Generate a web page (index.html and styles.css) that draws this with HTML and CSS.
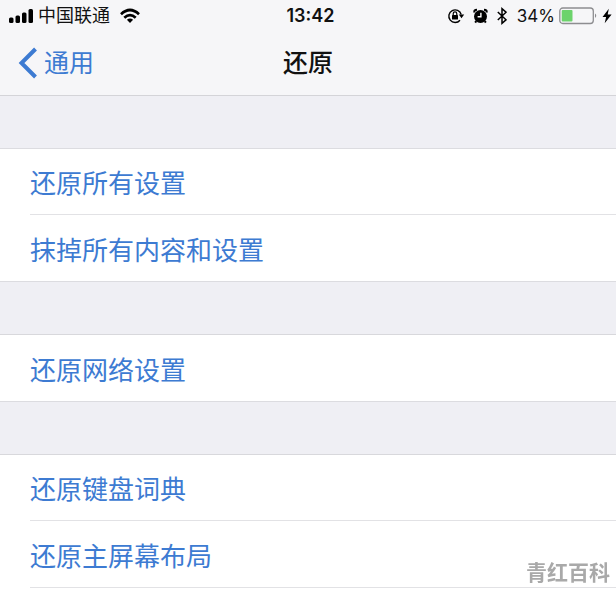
FILE: index.html
```html
<!DOCTYPE html>
<html lang="zh-CN">
<head>
<meta charset="utf-8">
<meta name="viewport" content="width=device-width, initial-scale=1">
<title>还原</title>
<link rel="stylesheet" href="styles.css">
</head>
<body>
<header class="top">
  <div class="status">
    <div class="status-left">
      <svg width="25" height="16" viewBox="0 0 25 16" aria-hidden="true">
        <rect x="0" y="9.500" width="4.500" height="5.500" rx="1.500"/>
        <rect x="6.500" y="7.500" width="4.500" height="7.500" rx="1.500"/>
        <rect x="13" y="4.500" width="4.500" height="10.500" rx="1.500"/>
        <rect x="19.500" y="1" width="4.500" height="14" rx="1.500"/>
      </svg>
      <span class="carrier">中国联通</span>
      <svg class="wifi" width="20" height="16" viewBox="0 0 20 16" aria-hidden="true">
        <g fill="none" stroke="#000" stroke-width="2.700">
          <path d="M1 6.200Q10-2.200 19 6.200"/>
          <path d="M4.300 9.800Q10 4.400 15.700 9.800"/>
        </g>
        <path d="M6.900 11.700Q10 9.100 13.100 11.700L10 15Z"/>
      </svg>
    </div>
    <time class="clock">13:42</time>
    <div class="status-right">
      <svg width="18" height="16" viewBox="0 0 18 16" aria-hidden="true">
        <path d="M13 12.200A6.300 6.300 0 1 1 14.200 6.500" fill="none" stroke="#000" stroke-width="1.400"/>
        <path d="M11.800 6.500h5.400l-2.700 3.800Z"/>
        <rect x="5" y="7" width="6" height="4.500" rx=".6"/>
        <path d="M6.200 7.300V5.700a1.800 1.800 0 0 1 3.600 0v1.600" fill="none" stroke="#000" stroke-width="1.200"/>
      </svg>
      <svg class="alarm" width="15" height="16" viewBox="0 0 15 16" aria-hidden="true">
        <circle cx="7.500" cy="8.500" r="6.500"/>
        <path d="M1.500 4.500Q.6 1.900 4 1.700M13.500 4.500Q14.400 1.900 11 1.700M3.200 13l-1 1.600M11.800 13l1 1.600" fill="none" stroke="#000" stroke-width="2"/>
        <path d="M7.900 4.800v4H4.600" fill="none" stroke="#fff" stroke-width="1.400"/>
      </svg>
      <svg class="bluetooth" width="10" height="18" viewBox="0 0 10 18" aria-hidden="true">
        <path d="M.8 5L9 12.800L5 16.300V1.700L9 5.200L.8 13" fill="none" stroke="#000" stroke-width="1.500"/>
      </svg>
      <span class="percent">34%</span>
      <svg class="battery" width="39" height="18" viewBox="0 0 39 18" aria-hidden="true">
        <rect x=".8" y="1" width="33.500" height="15.500" rx="3" fill="none" stroke="#8d8d90" stroke-width="1.300"/>
        <rect x="2.700" y="3" width="10.800" height="11.500" rx="1" fill="#6cd36c"/>
        <path d="M36 6.500q2.500 2.200 0 4.500Z" fill="#8d8d90"/>
      </svg>
      <svg class="bolt" width="10" height="16" viewBox="0 0 10 16" aria-hidden="true">
        <path d="M6.800 .8L.5 9h3.600L2.700 15.200L9.600 6.500H5.700Z"/>
      </svg>
    </div>
  </div>
  <nav class="navbar">
    <a class="back" href="#general">
      <svg width="20" height="34" viewBox="0 0 20 34" aria-hidden="true">
        <path d="M17.500 3L3.500 17L17.500 31" fill="none" stroke="#3d7bd2" stroke-width="4"/>
      </svg>
      <span>通用</span>
    </a>
    <h1 class="title">还原</h1>
  </nav>
</header>
<main class="groups">
  <section class="group">
    <button class="row" type="button">还原所有设置</button>
    <button class="row" type="button">抹掉所有内容和设置</button>
  </section>
  <section class="group">
    <button class="row" type="button">还原网络设置</button>
  </section>
  <section class="group group-open">
    <button class="row" type="button">还原键盘词典</button>
    <button class="row" type="button">还原主屏幕布局</button>
  </section>
</main>
<div class="watermark">青红百科</div>
</body>
</html>
```
FILE: styles.css
```css
* {
  box-sizing: border-box;
}

body {
  margin: 0;
  min-height: 100vh;
  display: flex;
  flex-direction: column;
  background: #efeff4;
  color: #111;
  font-family: Inter, "Noto Sans CJK SC", sans-serif;
}

svg {
  display: block;
  flex: none;
}

.top {
  background: #f6f6f8;
  border-bottom: 1px solid #d4d4d8;
}

.status {
  display: grid;
  grid-template-columns: 1fr auto 1fr;
  align-items: center;
  height: 31px;
  padding: 0 4px 0 9px;
  line-height: 24px;
}

.status-left,
.status-right {
  display: flex;
  align-items: center;
}

.status-right {
  justify-content: flex-end;
}

.carrier {
  margin-left: 4px;
  font-size: 18px;
}

.wifi {
  margin-left: 10px;
}

.clock {
  font-size: 18px;
  font-weight: 600;
}

.alarm {
  margin-left: 8px;
}

.bluetooth {
  margin-left: 9px;
}

.percent {
  margin-left: 10px;
  font-size: 17px;
}

.battery {
  margin-left: 4px;
}

.bolt {
  margin-left: 4px;
}

.navbar {
  display: grid;
  grid-template-columns: 1fr auto 1fr;
  align-items: center;
  height: 64px;
  padding: 0 18px;
}

.back {
  display: flex;
  align-items: center;
  gap: 6px;
  color: #3d7bd2;
  font-size: 25px;
  text-decoration: none;
}

.title {
  margin: 0;
  font-size: 25px;
  font-weight: 500;
}

.back,
.title {
  line-height: 36px;
}

.groups {
  flex: 1;
  display: flex;
  flex-direction: column;
  gap: 52px;
  padding-top: 52px;
}

.group {
  background: #fff;
  border-top: 1px solid #dcdce0;
  border-bottom: 1px solid #dcdce0;
}

.group + .group {
  border-top-color: #d8d8dc;
}

.group-open {
  flex: 1;
  border-bottom: 0;
}

.row {
  display: block;
  width: calc(100% - 30px);
  height: 66px;
  margin: 0 0 0 30px;
  padding: 0;
  border: 0;
  background: none;
  color: #3d7bd2;
  font: inherit;
  font-size: 26px;
  text-align: left;
}

.row:not(:last-child) {
  height: 65px;
}

.row + .row,
.group-open .row:last-child {
  box-sizing: content-box;
  border-top: 1px solid #e2e2e5;
}

.group-open .row:last-child {
  border-bottom: 1px solid #e2e2e5;
}

.watermark {
  position: fixed;
  right: 6px;
  bottom: 3px;
  color: #a9a9a9;
  font-size: 21px;
  font-weight: 700;
  line-height: 30px;
}
```
